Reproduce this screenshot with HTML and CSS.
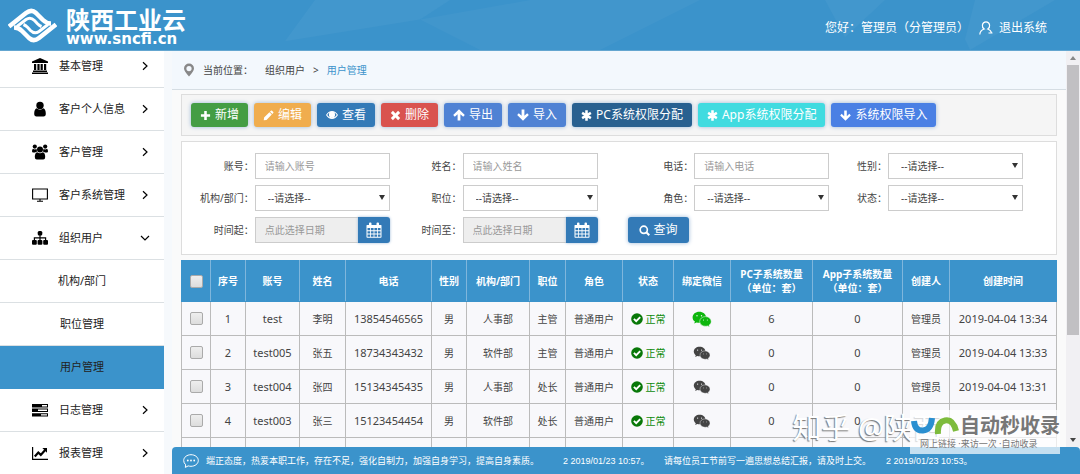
FILE: index.html
```html
<!DOCTYPE html>
<html lang="zh-CN">
<head>
<meta charset="utf-8">
<title>陕西工业云 - 用户管理</title>
<link rel="stylesheet" href="styles.css">
</head>
<body>
<svg class="defs" aria-hidden="true">
  <symbol id="i-bank" viewBox="0 0 16 16"><path d="M8 0 0 3.4V5h16V3.4zM2 6h2.2v6H2zm3.4 0h2.2v6H5.400zm3.200 0h2.200v6H8.600zM12 6h2.200v6H12zM1 12.500h14V14H1zM0 14.500h16V16H0z"/></symbol>
  <symbol id="i-user" viewBox="0 0 16 16"><circle cx="8" cy="4.500" r="3.700"/><path d="M4.500 7.300Q8 10 11.500 7.300 13.800 8.500 13.800 12.800 13.800 15.500 11.500 15.500h-7Q2.200 15.500 2.200 12.800 2.200 8.500 4.500 7.300z"/></symbol>
  <symbol id="i-users" viewBox="0 0 16 16"><circle cx="8" cy="5.500" r="3"/><circle cx="2.800" cy="2.600" r="2.100"/><circle cx="13.200" cy="2.600" r="2.100"/><path d="M5.200 8.200q2.800 2 5.600 0Q13.200 9 13.200 13q0 2.500-2 2.500H4.800q-2 0-2-2.500 0-4 2.400-4.800zM1 4.700q2 1.400 3.500 0 .200 1.800.700 2.700-1.500.3-2.200 1.100H1.200Q0 8.500 0 7.300 0 5.200 1 4.700zM15 4.700q-2 1.400-3.500 0-.2 1.800-.7 2.700 1.500.3 2.200 1.100h1.800Q16 8.500 16 7.300 16 5.200 15 4.700z"/></symbol>
  <symbol id="i-screen" viewBox="0 0 16 16"><path d="M.6 2h14.800v10H.6zM8 12v2M5 14.200h6" fill="none" stroke="currentColor" stroke-width="1.100"/></symbol>
  <symbol id="i-tree" viewBox="0 0 16 16"><rect x="5.700" y="1" width="4.600" height="4.600" rx="1.500"/><rect x="0" y="10" width="4.800" height="4.800" rx="1"/><rect x="5.600" y="10" width="4.800" height="4.800" rx="1"/><rect x="11.200" y="10" width="4.800" height="4.800" rx="1"/><path d="M8 5v6M2.400 11V7.900h11.200V11" fill="none" stroke="currentColor" stroke-width="1.200"/></symbol>
  <symbol id="i-tasks" viewBox="0 0 16 16"><path fill-rule="evenodd" d="M0 2h16v3.400H0zm10 1v1.400h5V3zM0 6.600h16V10H0zm6 1V9h9V7.600zM0 11.200h16v3.400H0zm9 1v1.400h6v-1.400z"/></symbol>
  <symbol id="i-chart" viewBox="0 0 16 16"><path d="M.6 2v12.400H16" fill="none" stroke="currentColor" stroke-width="1.200"/><path d="M2.800 11.500 6.300 7.500l2.500 2.400 4.400-4.900" fill="none" stroke="currentColor" stroke-width="2.200"/><path d="M10.400 3H15v4.700z"/></symbol>
  <symbol id="i-right" viewBox="0 0 10 10"><path d="M3 1.200 7 5 3 8.800" fill="none" stroke="currentColor" stroke-width="1.200"/></symbol>
  <symbol id="i-down" viewBox="0 0 10 10"><path d="M1 3l4 4 4-4" fill="none" stroke="currentColor" stroke-width="1.200"/></symbol>
  <symbol id="i-plus" viewBox="0 0 12 12"><path d="M4.600 1h2.800v3.600H11v2.800H7.400V11H4.600V7.400H1V4.600h3.600z"/></symbol>
  <symbol id="i-pencil" viewBox="0 0 12 12"><path d="M8.600.8q.6-.6 1.300 0l1.300 1.300q.6.7 0 1.300l-1 1-2.600-2.600zM7 2.400 9.600 5 3.800 10.800.8 11.300l.4-3.100z"/></symbol>
  <symbol id="i-eye" viewBox="0 0 14 12"><path fill-rule="evenodd" d="M0 6q2.800-4.700 7-4.700T14 6q-2.800 4.700-7 4.700T0 6zm1.400 0Q3.800 9.600 7 9.600T12.600 6Q11.500 4 9.700 3q1 1.200.9 2.700A3.600 3.600 0 0 1 7 9.300a3.600 3.600 0 0 1-3.600-3.600Q3.300 4.200 4.300 3 2.500 4 1.400 6z"/><circle cx="7" cy="5.500" r="2.700"/></symbol>
  <symbol id="i-times" viewBox="0 0 12 12"><path d="M3.200.9 6 3.700 8.800.9l2.300 2.300L8.300 6l2.800 2.800-2.300 2.300L6 8.300l-2.800 2.800L.9 8.800 3.700 6 .9 3.200z"/></symbol>
  <symbol id="i-up" viewBox="0 0 12 12"><path d="M6 .3 11.800 6.100 10.200 7.800 7.400 5.200v6.300H4.600V5.200L1.800 7.800.2 6.100z"/></symbol>
  <symbol id="i-dn" viewBox="0 0 12 12"><path d="M6 11.700.2 5.900 1.800 4.200 4.600 6.800V.5h2.800v6.300l2.800-2.600 1.600 1.700z"/></symbol>
  <symbol id="i-star" viewBox="0 0 12 12"><path d="M6 .4v11.200M1.200 3.200l9.600 5.600M10.800 3.200 1.200 8.800" stroke="currentColor" stroke-width="2.800"/></symbol>
  <symbol id="i-search" viewBox="0 0 12 12"><path d="M8 8l3.200 3.200" stroke="currentColor" stroke-width="2.200"/><circle cx="5.200" cy="5.200" r="3.900" fill="none" stroke="currentColor" stroke-width="1.800"/></symbol>
  <symbol id="i-cal" viewBox="0 0 16 16"><path fill-rule="evenodd" d="M1 3h2V1.500Q3 .5 4 .5h.5q1 0 1 1V3h5V1.500q0-1 1-1h.5q1 0 1 1V3h2q.5 0 .5.500V15q0 .8-.8.800H1.300Q.5 15.800.5 15V3.500Q.5 3 1 3zm.500 3v2.300h2.600V6zm3.400 0v2.300h2.700V6zm3.500 0v2.300h2.700V6zm3.500 0v2.300h2.600V6zM1.500 9.200v2.300h2.600V9.200zm3.400 0v2.300h2.700V9.200zm3.500 0v2.300h2.700V9.200zm3.500 0v2.300h2.600V9.200zM1.500 12.400v2.400h2.600v-2.400zm3.400 0v2.400h2.700v-2.400zm3.500 0v2.400h2.700v-2.400zm3.500 0v2.400h2.600v-2.400z"/></symbol>
  <symbol id="i-check" viewBox="0 0 12 12"><circle cx="6" cy="6" r="5.800"/><path d="M2.900 5.900 5.200 8.200 9.200 4.200" fill="none" stroke="#fff" stroke-width="1.900"/></symbol>
  <symbol id="i-wechat" viewBox="0 0 20 16"><path d="M7.300.8C3.500.8.600 3.200.600 6.400c0 1.800.9 3.200 2.300 4.200l-.7 2 2.400-1.200q1.200.4 2.900.4c3.600 0 6.500-2.400 6.500-5.500S11 .8 7.300.8z"/><path d="M13.400 5.600c-3.300 0-5.700 2.200-5.700 4.800s2.400 4.800 5.700 4.800q1.200 0 2.200-.3l1.900 1-.5-1.700c1.300-.9 2.200-2.200 2.200-3.800 0-2.600-2.600-4.800-5.800-4.800z" stroke="#f8f8fb" stroke-width=".5"/><g fill="#f8f8fb"><circle cx="5" cy="4.700" r=".7"/><circle cx="9.500" cy="4.700" r=".7"/><circle cx="11.500" cy="9" r=".5"/><circle cx="15.300" cy="9" r=".5"/></g></symbol>
</svg>

<header class="topbar">
  <svg class="facets" viewBox="0 0 1080 51" preserveAspectRatio="none" aria-hidden="true">
    <path d="M285 42 315 0H450L420 20z" fill="#fff" opacity=".04"/>
    <path d="M420 20 530 0H700L600 51H480z" fill="#fff" opacity=".03"/>
    <path d="M825 0h60l-40 38zM970 51l85-51h-80l-10 40z" fill="#fff" opacity=".04"/>
  </svg>
  <a class="brand" href="#">
    <svg class="brand-mark" viewBox="0 0 49 35" aria-hidden="true">
      <g id="wave" fill="none" stroke="#fff"><path d="M1 18.500 18 5Q23.500 .8 28 5l7 7q3.500 3.500 8 3.500" stroke-width="4.500"/><path d="M9 18.500 18 11.500q4.500-3 8.500 1l3 3.200q2 2 4 2.800" stroke-width="3"/></g>
      <use href="#wave" transform="rotate(180 24.500 17.500)"/>
    </svg>
    <span class="brand-text"><strong>陕西工业云</strong><span>www.sncfi.cn</span></span>
  </a>
  <div class="account">
    <span>您好&#65306;管理员&#65288;分管理员&#65289;</span>
    <a href="#"><svg class="ic-person" viewBox="0 0 14 14" aria-hidden="true"><path d="M.8 13.500Q1 9.500 5.200 8 3 6.500 3.400 4 4 .8 7 .8t3.600 3.200Q11 6.500 8.800 8q2.700 1 3.700 3.500M9.500 12H13.500" fill="none" stroke="currentColor" stroke-width="1.200"/></svg>退出系统</a>
  </div>
</header>

<div class="shell">
  <nav class="sidebar">
    <a href="#"><svg><use href="#i-bank"/></svg><span>基本管理</span><svg class="chev"><use href="#i-right"/></svg></a>
    <a href="#"><svg><use href="#i-user"/></svg><span>客户个人信息</span><svg class="chev"><use href="#i-right"/></svg></a>
    <a href="#"><svg><use href="#i-users"/></svg><span>客户管理</span><svg class="chev"><use href="#i-right"/></svg></a>
    <a href="#"><svg><use href="#i-screen"/></svg><span>客户系统管理</span><svg class="chev"><use href="#i-right"/></svg></a>
    <a href="#"><svg><use href="#i-tree"/></svg><span>组织用户</span><svg class="chev"><use href="#i-down"/></svg></a>
    <a href="#" class="sub">机构/部门</a>
    <a href="#" class="sub">职位管理</a>
    <a href="#" class="sub active">用户管理</a>
    <a href="#"><svg><use href="#i-tasks"/></svg><span>日志管理</span><svg class="chev"><use href="#i-right"/></svg></a>
    <a href="#"><svg><use href="#i-chart"/></svg><span>报表管理</span><svg class="chev"><use href="#i-right"/></svg></a>
  </nav>

  <div class="main">
    <div class="view">
      <div class="page">
        <div class="crumbs">
          <svg viewBox="0 0 12 14" aria-hidden="true"><path fill-rule="evenodd" d="M6 .5a5 5 0 0 1 5 5Q11 8 6 13.500 1 8 1 5.500a5 5 0 0 1 5-5zM6 3a2.600 2.600 0 1 0 0 5.200A2.600 2.600 0 0 0 6 3z" fill="#888"/></svg>
          <span class="where">当前位置&#65306;</span><span>组织用户</span><span>&gt;</span><a href="#">用户管理</a>
        </div>
        <div class="content">
          <div class="toolbar">
            <button class="btn green"><svg><use href="#i-plus"/></svg>新增</button>
            <button class="btn orange"><svg><use href="#i-pencil"/></svg>编辑</button>
            <button class="btn blue wide"><svg><use href="#i-eye"/></svg>查看</button>
            <button class="btn red"><svg><use href="#i-times"/></svg>删除</button>
            <button class="btn royal wide"><svg><use href="#i-up"/></svg>导出</button>
            <button class="btn royal wide"><svg><use href="#i-dn"/></svg>导入</button>
            <button class="btn navy"><svg><use href="#i-star"/></svg>PC系统权限分配</button>
            <button class="btn cyan"><svg><use href="#i-star"/></svg>App系统权限分配</button>
            <button class="btn bright"><svg><use href="#i-dn"/></svg>系统权限导入</button>
          </div>

          <form class="filters">
            <div class="field"><label for="f1">账号&#65306;</label><input id="f1" type="text" placeholder="请输入账号"></div>
            <div class="field"><label for="f2">姓名&#65306;</label><input id="f2" type="text" placeholder="请输入姓名"></div>
            <div class="field"><label for="f3">电话&#65306;</label><input id="f3" type="text" placeholder="请输入电话"></div>
            <div class="field"><label for="f4">性别&#65306;</label><span class="pick"><select id="f4"><option>--请选择--</option></select></span></div>
            <div class="field first"><label for="f5">机构/部门&#65306;</label><span class="pick"><select id="f5"><option>--请选择--</option></select></span></div>
            <div class="field"><label for="f6">职位&#65306;</label><span class="pick"><select id="f6"><option>--请选择--</option></select></span></div>
            <div class="field"><label for="f7">角色&#65306;</label><span class="pick"><select id="f7"><option>--请选择--</option></select></span></div>
            <div class="field"><label for="f8">状态&#65306;</label><span class="pick"><select id="f8"><option>--请选择--</option></select></span></div>
            <div class="field first"><label for="f9">时间起&#65306;</label><span class="date"><input id="f9" type="text" placeholder="点此选择日期" readonly><button type="button" aria-label="选择起始日期"><svg><use href="#i-cal"/></svg></button></span></div>
            <div class="field"><label for="f10">时间至&#65306;</label><span class="date"><input id="f10" type="text" placeholder="点此选择日期" readonly><button type="button" aria-label="选择结束日期"><svg><use href="#i-cal"/></svg></button></span></div>
            <div class="submit"><button type="button" class="btn blue"><svg><use href="#i-search"/></svg>查询</button></div>
          </form>

          <table class="grid">
            <colgroup><col class="w29"><col class="w35"><col class="w54"><col class="w46"><col class="w86"><col class="w35"><col class="w63"><col class="w36"><col class="w57"><col class="w51"><col class="w57"><col class="w82"><col class="w90"><col class="w47"><col class="w107"></colgroup>
            <thead><tr><th><input type="checkbox" aria-label="全选"></th><th>序号</th><th>账号</th><th>姓名</th><th>电话</th><th>性别</th><th>机构/部门</th><th>职位</th><th>角色</th><th>状态</th><th>绑定微信</th><th>PC子系统数量<br>&#65288;单位&#65306;套&#65289;</th><th>App子系统数量<br>&#65288;单位&#65306;套&#65289;</th><th>创建人</th><th>创建时间</th></tr></thead>
            <tbody>
              <tr><td><input type="checkbox" aria-label="选择 test"></td><td class="n">1</td><td class="n">test</td><td>李明</td><td class="n">13854546565</td><td>男</td><td>人事部</td><td>主管</td><td>普通用户</td><td><span class="ok"><svg><use href="#i-check"/></svg>正常</span></td><td><svg class="wx on"><use href="#i-wechat"/></svg></td><td class="n">6</td><td class="n">0</td><td>管理员</td><td class="n">2019-04-04 13:34</td></tr>
              <tr><td><input type="checkbox" aria-label="选择 test005"></td><td class="n">2</td><td class="n">test005</td><td>张五</td><td class="n">18734343432</td><td>男</td><td>软件部</td><td>主管</td><td>普通用户</td><td><span class="ok"><svg><use href="#i-check"/></svg>正常</span></td><td><svg class="wx"><use href="#i-wechat"/></svg></td><td class="n">0</td><td class="n">0</td><td>管理员</td><td class="n">2019-04-04 13:33</td></tr>
              <tr><td><input type="checkbox" aria-label="选择 test004"></td><td class="n">3</td><td class="n">test004</td><td>张四</td><td class="n">15134345435</td><td>男</td><td>人事部</td><td>处长</td><td>普通用户</td><td><span class="ok"><svg><use href="#i-check"/></svg>正常</span></td><td><svg class="wx"><use href="#i-wechat"/></svg></td><td class="n">0</td><td class="n">0</td><td>管理员</td><td class="n">2019-04-04 13:31</td></tr>
              <tr><td><input type="checkbox" aria-label="选择 test003"></td><td class="n">4</td><td class="n">test003</td><td>张三</td><td class="n">15123454454</td><td>男</td><td>软件部</td><td>处长</td><td>普通用户</td><td><span class="ok"><svg><use href="#i-check"/></svg>正常</span></td><td><svg class="wx"><use href="#i-wechat"/></svg></td><td class="n">0</td><td class="n">0</td><td></td><td></td></tr>
              <tr><td></td><td></td><td></td><td></td><td></td><td></td><td></td><td></td><td></td><td></td><td></td><td></td><td></td><td></td><td></td></tr>
            </tbody>
          </table>
        </div>
      </div>
      <div class="scrollbar" aria-hidden="true"><i class="tri up"></i><i class="thumb"></i><i class="tri down"></i></div>
    </div>
    <footer class="notice">
      <svg viewBox="0 0 16 14" aria-hidden="true"><path d="M8 .7c4 0 7.300 2.500 7.300 5.800S12 12.300 8 12.300q-1.500 0-2.800-.4L2.300 13.400l.4-2.600Q.7 9 .7 6.500C.7 3.200 4 .7 8 .7z" fill="none" stroke="#fff"/><g fill="#fff"><circle cx="4.800" cy="6.500" r=".9"/><circle cx="8" cy="6.500" r=".9"/><circle cx="11.200" cy="6.500" r=".9"/></g></svg>
      <span class="msg">端正态度&#65292;热爱本职工作&#65292;存在不足&#65292;强化自制力&#65292;加强自身学习&#65292;提高自身素质。</span><span class="stamp">2 2019/01/23 10:57。</span>
      <span class="msg second">请每位员工节前写一遍思想总结汇报&#65292;请及时上交。</span><span class="stamp">2 2019/01/23 10:53。</span>
    </footer>
  </div>
</div>

<div class="watermark">知乎 @陕西</div>
<div class="stampbox">
  <svg viewBox="0 0 50 20" aria-hidden="true"><path d="M4 5q1 10 9 9.500T22 2" fill="none" stroke="#2a8fd0" stroke-width="6"/><path d="M28 18q-1-12 7-13.500T46 15" fill="none" stroke="#7dbb3c" stroke-width="6"/></svg>
  <strong>自动秒收录</strong>
  <small>网上链接 ·来访一次 ·自动收录</small>
</div>
</body>
</html>
```
FILE: styles.css
```css
* { box-sizing: border-box; }
body {
  margin: 0;
  height: 100vh;
  display: flex;
  flex-direction: column;
  overflow: hidden;
  background: #f6f9fc;
  color: #444;
  font: 10px/14px "Noto Sans", "Noto Sans CJK SC", sans-serif;
}
a { color: inherit; text-decoration: none; }
button, input, select { font: inherit; color: inherit; margin: 0; }
svg { fill: currentColor; flex: none; }
.defs { position: absolute; width: 0; height: 0; }

.topbar {
  position: relative;
  z-index: 1;
  flex: none;
  display: flex;
  align-items: center;
  justify-content: space-between;
  height: 51px;
  padding: 0 33px 0 8px;
  background: #3b93cb;
  border-bottom: 1px solid #64a6d0;
  color: #fff;
}
.facets { position: absolute; inset: 0; width: 100%; height: 100%; }
.brand, .account { position: relative; display: flex; align-items: center; }
.brand { gap: 9px; }
.brand-mark { width: 49px; height: 35px; }
.brand-text { display: flex; flex-direction: column; padding-top: 1px; }
.brand-text strong { font-size: 24px; line-height: 26px; font-weight: 700; }
.brand-text span { font: bold 15px/12px "DejaVu Sans", sans-serif; }
.account { gap: 10px; padding-top: 6px; font-size: 12px; line-height: 18px; }
.account a { display: flex; align-items: center; gap: 6px; }
.ic-person { width: 14px; height: 14px; }

.shell { flex: 1; min-height: 0; display: flex; }
.sidebar { flex: none; width: 164px; margin-top: -6px; background: #fff; font-size: 11px; color: #222; }
.sidebar a {
  display: flex;
  align-items: center;
  gap: 11px;
  height: 43px;
  padding: 0 14px 0 32px;
  border-bottom: 1px solid #dbe0e3;
}
.sidebar svg { width: 16px; height: 16px; color: #000; }
.sidebar .chev { width: 10px; height: 10px; margin-left: auto; }
.sidebar .sub { justify-content: center; padding: 0; }
.sidebar .active { background: #3b93cb; border-color: #3b93cb; }

.main { flex: 1; min-width: 0; display: flex; flex-direction: column; margin-left: 8px; }
.view { flex: 1; min-height: 0; display: flex; }
.page { flex: 1; min-width: 0; overflow: hidden; background: #fafafa; }
.crumbs {
  display: flex;
  align-items: center;
  gap: 8px;
  height: 39px;
  padding: 0 11px;
  background: #f3f8fd;
  border-bottom: 1px solid #d5dde3;
}
.crumbs svg { width: 12px; height: 14px; }
.crumbs .where { margin-right: 4px; }
.crumbs a { color: #3b93cb; }
.content { display: flex; flex-direction: column; gap: 5px; padding: 4px 9px; }

.toolbar {
  display: flex;
  gap: 6px;
  padding: 8px 9px;
  background: #f5f5f5;
  border: 1px solid #ddd;
}
.btn {
  display: flex;
  align-items: center;
  gap: 4px;
  height: 24px;
  padding: 0 9px;
  border: 0;
  border-radius: 3px;
  color: #fff;
  font-size: 12px;
  line-height: 18px;
  white-space: nowrap;
  box-shadow: 0 0 4px #9ab8d8;
}
.btn svg { width: 11px; height: 11px; }
.wide svg { width: 12px; height: 12px; }
.green { background: #449d44; }
.orange { background: #f0ad4e; }
.blue { background: #337ab7; }
.red { background: #d9534f; }
.royal { background: #4f82d4; }
.navy { background: #286090; }
.cyan { background: #40dbe0; }
.bright { background: #4a80e4; }

.filters {
  display: grid;
  grid-template-columns: 208fr 208fr 232fr 194fr 33fr;
  grid-auto-rows: 26px;
  row-gap: 6px;
  padding: 11px 0;
  background: #fff;
  border: 1px solid #ddd;
}
.field { display: flex; justify-content: flex-end; align-items: center; gap: 1px; }
.first { grid-column: 1; }
.field input, .field select {
  width: 135px;
  height: 26px;
  padding: 0 9px;
  border: 1px solid #ccc;
  border-radius: 0;
  background: #fff;
  outline: 0;
}
.field select { appearance: none; padding: 0 12px; }
.field input::placeholder { color: #999; opacity: 1; }
.pick { position: relative; display: flex; }
.pick::after {
  content: "";
  position: absolute;
  right: 5px;
  top: 10px;
  border: 3px solid transparent;
  border-top: 5px solid #333;
  border-bottom: 0;
  pointer-events: none;
}
.date { display: flex; width: 135px; }
.field .date input { flex: 1; min-width: 0; background: #eee; border-right: 0; }
.date button {
  display: grid;
  place-items: center;
  width: 32px;
  padding: 0;
  border: 0;
  border-radius: 0 3px 3px 0;
  background: #337ab7;
  color: #fff;
  box-shadow: 0 0 3px #9ab8d8;
}
.date svg { width: 16px; height: 16px; }
.submit { padding-left: 30px; }
.submit .btn { height: 26px; padding: 0 11px; }

.grid { width: 100%; table-layout: fixed; border-collapse: collapse; background: #f8f8fb; }
.grid th, .grid td { padding: 0; border: 1px solid #bbb; text-align: center; white-space: nowrap; }
.grid th { height: 41px; background: #3b93cb; border-color: #3b93cb #7fb6dc; color: #fff; font-weight: 700; }
.grid th:first-child { border-left-color: #3b93cb; }
.grid th:last-child { border-right-color: #3b93cb; }
.grid td { height: 34px; }
.grid .n { font-size: 11px; }
.grid input {
  appearance: none;
  display: block;
  width: 13px;
  height: 13px;
  margin: 0 auto;
  border: 1px solid #aaa;
  border-radius: 2px;
  background: linear-gradient(#eee, #ddd);
}
.w29 { width: 29px; } .w35 { width: 35px; } .w36 { width: 36px; } .w46 { width: 46px; }
.w47 { width: 47px; } .w51 { width: 51px; } .w54 { width: 54px; } .w57 { width: 57px; }
.w63 { width: 63px; } .w82 { width: 82px; } .w86 { width: 86px; } .w90 { width: 90px; }
.w107 { width: 107px; }
.ok { display: flex; justify-content: center; align-items: center; gap: 3px; color: #0a8a0a; }
.ok svg { width: 12px; height: 12px; color: #087808; }
.wx { display: block; width: 18px; height: 14px; margin: 0 auto; color: #444; }
.wx.on { width: 20px; height: 16px; color: #0db60d; }

.scrollbar {
  flex: none;
  width: 14px;
  display: flex;
  flex-direction: column;
  align-items: center;
  padding: 5px 0;
  background: #f1f0f3;
}
.thumb { width: 12px; flex: 0 0 70%; margin-top: 5px; background: #c1c0c3; }
.tri { border: 3px solid transparent; }
.up { border-top: 0; border-bottom: 4px solid #888; }
.down { border-bottom: 0; border-top: 4px solid #444; margin-top: auto; }

.notice {
  flex: none;
  display: flex;
  align-items: center;
  height: 27px;
  padding: 0 11px;
  border-radius: 4px 4px 0 0;
  background: #3b93cb;
  color: #fff;
  font: 9px/14px "Liberation Sans", "Noto Sans CJK SC", sans-serif;
  white-space: nowrap;
}
.notice svg { width: 16px; height: 14px; margin-right: 7px; }
.notice .msg { min-width: 357px; }
.notice .stamp { min-width: 101px; }
.notice .second { min-width: 222px; }

.watermark {
  position: absolute;
  right: 138px;
  bottom: 26px;
  font-size: 29px;
  line-height: 40px;
  color: #fff;
  text-shadow: -1px 1px 1px #777;
  white-space: nowrap;
}
.stampbox {
  position: absolute;
  right: 20px;
  bottom: 20px;
  display: grid;
  grid-template-columns: 50px auto;
  align-items: center;
  align-content: start;
  width: 150px;
  height: 44px;
  padding-top: 4px;
  background: rgba(255, 255, 255, .7);
  color: #777;
}
.stampbox svg { width: 50px; height: 20px; }
.stampbox strong { font-size: 20px; line-height: 24px; white-space: nowrap; }
.stampbox small { grid-column: 1 / 3; padding-left: 10px; font-size: 9px; line-height: 12px; white-space: nowrap; }
```
